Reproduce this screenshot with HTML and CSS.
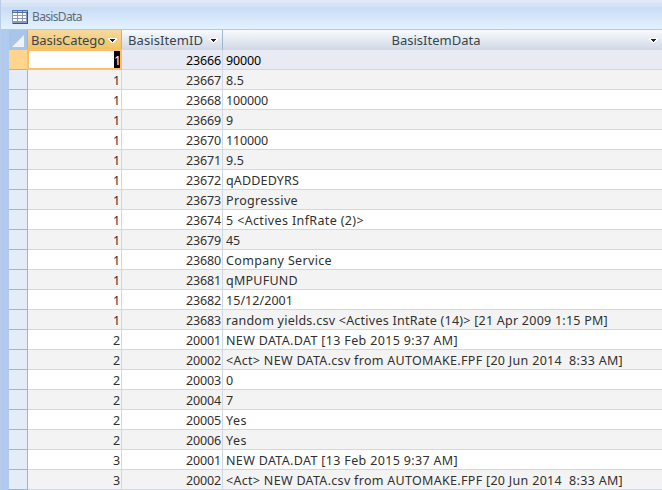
FILE: index.html
```html
<!DOCTYPE html>
<html lang="en">
<head>
<meta charset="utf-8">
<title>BasisData</title>
<link rel="stylesheet" href="styles.css">
</head>
<body>
<div class="window">
  <header class="titlebar">
    <svg class="table-icon" width="16" height="14" viewBox="0 0 16 14" shape-rendering="crispEdges">
      <path fill="#8799bd" d="M0 0h16v14H0z"/>
      <path fill="#526fae" d="M0 0h16v3H0z"/>
      <path fill="#a9bce3" d="M1 1h4v1H1zM6 1h4v1H6zM11 1h4v1h-4z"/>
      <path fill="#fff" d="M1 3h4v2H1zM6 3h4v2H6zM11 3h3v2h-3zM1 6h4v2H1zM6 6h4v2H6zM11 6h3v2h-3zM1 9h4v2H1zM6 9h4v2H6zM11 9h3v2h-3z"/>
      <path fill="#405373" d="M15 2h1v12H1v-1h14z"/>
    </svg>
    <span class="title">BasisData</span>
  </header>
  <main class="sheet">
    <div class="row head">
      <div class="corner"><svg width="12" height="12"><path fill="#edf2f8" d="M12 0v12H0z"/></svg></div>
      <div class="th active"><span class="name">BasisCatego</span><svg class="arrow" width="9" height="5" shape-rendering="crispEdges"><path fill="#fff" d="M0 0h9v2H8v1H7v1H6v1H3V4H2V3H1V2H0z"/><path fill="#222" d="M2 1h5v1H6v1H5v1H4V3H3V2H2z"/></svg></div>
      <div class="th"><span class="name">BasisItemID</span><svg class="arrow" width="9" height="5" shape-rendering="crispEdges"><path fill="#fff" d="M0 0h9v2H8v1H7v1H6v1H3V4H2V3H1V2H0z"/><path fill="#222" d="M2 1h5v1H6v1H5v1H4V3H3V2H2z"/></svg></div>
      <div class="th wide"><span class="name">BasisItemData</span><svg class="arrow" width="9" height="5" shape-rendering="crispEdges"><path fill="#fff" d="M0 0h9v2H8v1H7v1H6v1H3V4H2V3H1V2H0z"/><path fill="#222" d="M2 1h5v1H6v1H5v1H4V3H3V2H2z"/></svg></div>
    </div>
    <div id="rows"></div>
  </main>
</div>
<script src="rows.js"></script>
</body>
</html>
```
FILE: styles.css
```css
* { box-sizing: border-box; }
body { margin: 0; font: 12.5px/18px "Noto Sans", "Open Sans", sans-serif; color: #303030; }
.window { width: 662px; height: 490px; overflow: hidden; background: #b0caf0; border-left: 1px solid #b8cdea; }
.titlebar { height: 30px; display: flex; align-items: flex-start; padding: 10px 0 0 12px; margin-left: -1px; border-bottom: 1px solid #a6cbf5; background: linear-gradient(#dfe9fa 0 3px, #d5e3f5 3px 7px, #c8dcf6 7px, #e2f1fe 28px); }
.table-icon { flex: none; }
.title { margin-left: 4px; line-height: 14px; color: #626b78; font-size: 12px; letter-spacing: -0.65px; }
.sheet { margin-left: 8px; }
.row { display: grid; grid-template-columns: 19px 94px 101px 1fr; grid-template-rows: 20px; height: 20px; }
.row > div { border-right: 1px solid #d0d7e5; border-bottom: 1px solid #d0d7e5; white-space: pre; }
.row > div:last-child { border-right: 0; }
.row .selector { background: #e4ecf7; border-color: #9eb6ce; }
.num, .data { padding-top: 2px; line-height: 17.5px; }
.num { text-align: right; padding-right: 1px; letter-spacing: -0.15px; }
.data { padding-left: 3px; }
#rows .row:nth-child(odd) { background: #fff; }
#rows .row:nth-child(even) { background: #f3f3f3; }
#rows .row:first-child { background: #e8ebf4; color: #000; }
#rows .row:first-child .selector { background: #ffd58d; }
#rows .row .current { padding-top: 1px; background: #fff; border: 0; box-shadow: inset 0 0 0 1px #ffbd69, 0 0 0 1px #ffbd69; margin: 0 1px 1px 0; }
.current span { display: inline-block; width: 6px; height: 17px; line-height: 19px; background: #000; color: #fff; vertical-align: top; }
.row.head { background: linear-gradient(#f8fbfd, #d0d8e5); font-size: 13px; color: #36464f; }
.row.head > div { border-bottom: 0; border-color: #9eb6ce; }
.row .corner { display: flex; align-items: flex-end; justify-content: flex-end; padding: 0 3px 3px 0; background: #a9c4e9; }
.th { display: flex; align-items: center; justify-content: space-between; padding: 0 4px 0 3px; }
.th.active { background: linear-gradient(#f7d9a0, #f1c15f); }
.th + .th { padding-left: 6px; }
.row .th.wide { padding-left: 0; }
.th.wide .name { flex: 1; text-align: center; }
```
FILE: rows.js
```js
// category, item id, value, text width in pixels
const data = [
  [1, 23666, "90000", 35], [1, 23667, "8.5", 18], [1, 23668, "100000", 42], [1, 23669, "9", 7],
  [1, 23670, "110000", 42], [1, 23671, "9.5", 18], [1, 23672, "qADDEDYRS", 73], [1, 23673, "Progressive", 72],
  [1, 23674, "5 <Actives InfRate (2)>", 138], [1, 23679, "45", 14], [1, 23680, "Company Service", 106],
  [1, 23681, "qMPUFUND", 72], [1, 23682, "15/12/2001", 67],
  [1, 23683, "random yields.csv <Actives IntRate (14)> [21 Apr 2009 1:15 PM]", 382],
  [2, 20001, "NEW DATA.DAT [13 Feb 2015 9:37 AM]", 232],
  [2, 20002, "<Act> NEW DATA.csv from AUTOMAKE.FPF [20 Jun 2014  8:33 AM]", 397],
  [2, 20003, "0", 7], [2, 20004, "7", 7], [2, 20005, "Yes", 21], [2, 20006, "Yes", 21],
  [3, 20001, "NEW DATA.DAT [13 Feb 2015 9:37 AM]", 232],
  [3, 20002, "<Act> NEW DATA.csv from AUTOMAKE.FPF [20 Jun 2014  8:33 AM]", 397]
];

const cell = (className, text) => {
  const el = document.createElement("div");
  const span = document.createElement("span");
  el.className = className;
  span.textContent = text;
  el.append(span);
  return el;
};

const fit = (el, width) => {
  const span = el.firstChild;
  const spacing = (width - span.getBoundingClientRect().width) / span.textContent.length;
  span.style.letterSpacing = spacing.toFixed(3) + "px";
};

data.forEach(([category, id, value, width], index) => {
  const row = document.createElement("div");
  const text = cell("data", value);
  row.className = "row";
  row.append(
    cell("selector", ""),
    cell(index === 0 ? "num current" : "num", category),
    cell("num", id),
    text
  );
  document.getElementById("rows").append(row);
  fit(text, width);
});

document.querySelectorAll(".head .name").forEach((name, i) => {
  if (i < 2) fit(name.parentElement, [74, 75][i]);
});
```
